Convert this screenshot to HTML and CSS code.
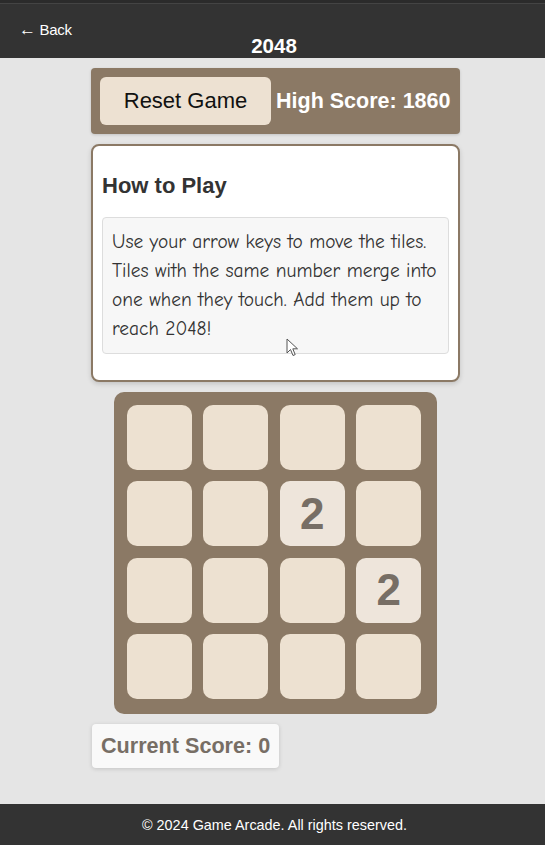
FILE: index.html
```html
<!DOCTYPE html>
<html>
<head>
<meta charset="utf-8">
<link rel="stylesheet" href="styles.css">
</head>
<body>
<header class="topbar">
  <a class="back" href="#"><span class="arrow">←</span> Back</a>
  <h1 class="title">2048</h1>
</header>
<main class="main">
  <div class="column">
    <div class="controls">
      <button class="reset">Reset Game</button>
      <span class="high">High Score: 1860</span>
    </div>
    <section class="card">
      <h2 class="card-title">How to Play</h2>
      <p class="instructions">Use your arrow keys to move the tiles. Tiles with the same number merge into one when they touch. Add them up to reach 2048!</p>
      <svg class="cursor" width="14" height="20" viewBox="0 0 14 20"><path d="M1 1 L1 15 L4.5 11.5 L7 17.5 L9.2 16.6 L6.8 10.8 L11.5 10.8 Z" fill="#fff" stroke="#555" stroke-width="1" stroke-linejoin="round"/></svg>
    </section>
    <div class="board">
      <div class="tile"></div><div class="tile"></div><div class="tile"></div><div class="tile"></div>
      <div class="tile"></div><div class="tile"></div><div class="tile tile-2">2</div><div class="tile"></div>
      <div class="tile"></div><div class="tile"></div><div class="tile"></div><div class="tile tile-2">2</div>
      <div class="tile"></div><div class="tile"></div><div class="tile"></div><div class="tile"></div>
    </div>
    <div class="score">Current Score: 0</div>
  </div>
</main>
<footer class="footer">© 2024 Game Arcade. All rights reserved.</footer>
</body>
</html>
```
FILE: styles.css
```css
* { box-sizing: border-box; }
html, body { margin: 0; padding: 0; }
body {
  background: #e5e5e5;
  font-family: "Liberation Sans", Arial, sans-serif;
  width: 545px;
  min-height: 845px;
  display: flex;
  flex-direction: column;
}
.topbar {
  background: #333;
  height: 58px;
  border-top: 3px solid #2b2b2b;
  box-shadow: inset 0 1px 0 #444;
  display: flex;
  flex-direction: column;
  align-items: center;
}
.back {
  align-self: flex-start;
  color: #fff;
  text-decoration: none;
  font-size: 15px;
  margin-left: 19px;
  margin-top: 18px;
  line-height: 18px;
  letter-spacing: -0.3px;
}
.arrow {
  font-size: 17px;
}
.title {
  margin: -3px 0 0 3px;
  color: #fff;
  font-size: 20.5px;
  font-weight: bold;
  line-height: 20px;
}
.main {
  flex: 1;
  display: flex;
  justify-content: center;
  padding: 10px 0 36px 6px;
}
.column {
  width: 369px;
  display: flex;
  flex-direction: column;
  align-items: center;
  gap: 10px;
}
.controls {
  width: 100%;
  background: #8b7965;
  border-radius: 4px;
  padding: 9px;
  display: flex;
  align-items: center;
  gap: 5px;
  box-shadow: 0 1px 3px rgba(0,0,0,0.15);
}
.reset {
  width: 171px;
  height: 48px;
  background: #ede1d2;
  border: none;
  border-radius: 6px;
  font-family: "Liberation Sans", Arial, sans-serif;
  font-size: 22px;
  color: #111;
  padding: 0;
}
.high {
  color: #fff;
  font-size: 21.5px;
  font-weight: bold;
  white-space: nowrap;
}
.card {
  width: 100%;
  height: 238px;
  background: #fff;
  border: 2px solid #8b7965;
  border-radius: 8px;
  padding: 0 9px;
  position: relative;
  box-shadow: 0 2px 5px rgba(0,0,0,0.15);
}
.card-title {
  margin: 27px 0 18px;
  font-size: 22px;
  line-height: 26px;
  font-weight: bold;
  color: #333;
}
.instructions {
  margin: 0;
  background: #f7f7f7;
  border: 1px solid #ddd;
  border-radius: 4px;
  padding: 10px 4px 9px 9px;
  font-family: "Comic Sans MS", "Comic Neue", "Open Sans", cursive;
  font-size: 19.4px;
  line-height: 29px;
  color: #333;
}
.cursor {
  position: absolute;
  left: 193px;
  top: 192px;
}
.board {
  width: 323px;
  height: 322px;
  background: #8b7965;
  border-radius: 10px;
  padding: 13px;
  display: grid;
  grid-template-columns: repeat(4, 65px);
  grid-template-rows: repeat(4, 65px);
  gap: 11.4px;
}
.tile {
  background: #ede1d1;
  border-radius: 10px;
  display: flex;
  align-items: center;
  justify-content: center;
  font-size: 44px;
  font-weight: bold;
  color: #776e65;
}
.tile-2 { background: #eee5db; }
.score {
  align-self: flex-start;
  margin-left: 1px;
  background: #f9f9f9;
  border-radius: 4px;
  padding: 0 9px;
  height: 44px;
  display: flex;
  align-items: center;
  font-size: 21.6px;
  font-weight: bold;
  color: #776e65;
  box-shadow: 0 1px 4px rgba(0,0,0,0.15);
}
.footer {
  background: #333;
  color: #fff;
  height: 42px;
  display: flex;
  align-items: center;
  justify-content: center;
  font-size: 14.4px;
  padding-left: 4px;
}
```
